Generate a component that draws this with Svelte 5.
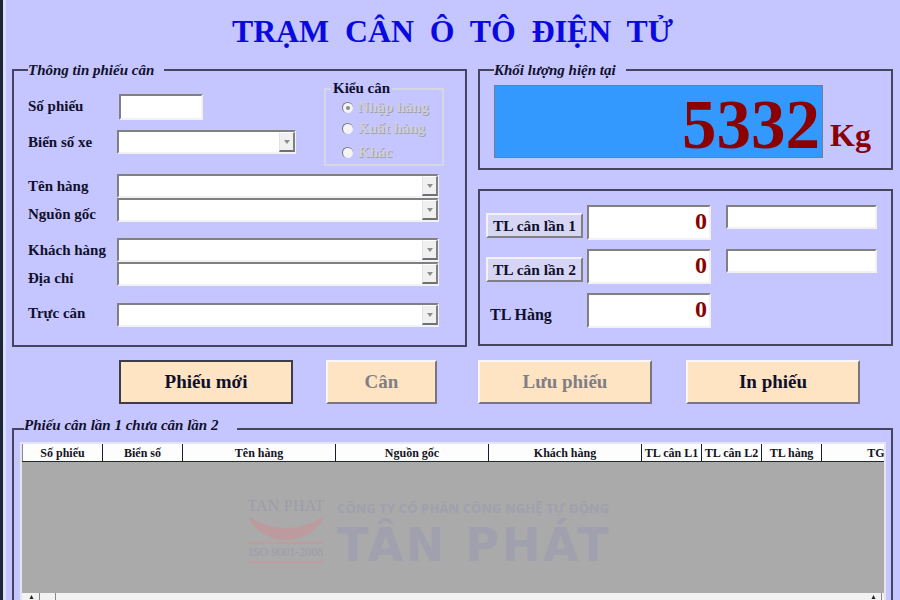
<script>
	const columns = [
		{ label: 'Số phiếu', width: 80 },
		{ label: 'Biển số', width: 80 },
		{ label: 'Tên hàng', width: 153 },
		{ label: 'Nguồn gốc', width: 153 },
		{ label: 'Khách hàng', width: 153 },
		{ label: 'TL cân L1', width: 60 },
		{ label: 'TL cân L2', width: 60 },
		{ label: 'TL hàng', width: 60 },
		{ label: 'TG', width: 109 }
	];

	const lowerFields = [
		{ label: 'Tên hàng', cls: 'first' },
		{ label: 'Nguồn gốc', cls: 'tight' },
		{ label: 'Khách hàng', cls: 'spaced' },
		{ label: 'Địa chỉ', cls: 'tight' },
		{ label: 'Trực cân', cls: 'spaced duty' }
	];

	const radios = [
		{ label: 'Nhập hàng', checked: true, cls: '' },
		{ label: 'Xuất hàng', checked: false, cls: '' },
		{ label: 'Khác', checked: false, cls: 'last' }
	];

	const actions = [
		{ label: 'Phiếu mới', cls: 'wide focused' },
		{ label: 'Cân', cls: 'narrow disabled' },
		{ label: 'Lưu phiếu', cls: 'wide disabled' },
		{ label: 'In phiếu', cls: 'wide' }
	];
</script>

{#snippet combo(cls)}
	<div class="combo {cls}">
		<span class="combo-btn"><i></i></span>
	</div>
{/snippet}

<div class="app">
	<h1 class="title">TRẠM&nbsp; CÂN&nbsp; Ô&nbsp; TÔ&nbsp; ĐIỆN&nbsp; TỬ</h1>

	<div class="top">
		<fieldset class="panel info">
			<legend>Thông tin phiếu cân</legend>
			<div class="info-head">
				<div class="head-fields">
					<div class="row ticket">
						<span class="lbl">Số phiếu</span>
						<div class="input ticket-input"></div>
					</div>
					<div class="row plate">
						<span class="lbl">Biển số xe</span>
						{@render combo('short')}
					</div>
				</div>
				<fieldset class="kind">
					<legend>Kiểu cân</legend>
					{#each radios as r}
						<div class="radio {r.cls}">
							<span class="dot" class:checked={r.checked}></span>
							<span class="radio-text">{r.label}</span>
						</div>
					{/each}
				</fieldset>
			</div>
			{#each lowerFields as f}
				<div class="row {f.cls}">
					<span class="lbl">{f.label}</span>
					{@render combo('long')}
				</div>
			{/each}
		</fieldset>

		<div class="right">
			<fieldset class="panel weight">
				<legend>Khối lượng hiện tại</legend>
				<div class="weight-row">
					<div class="display">5332</div>
					<span class="unit">Kg</span>
				</div>
			</fieldset>
			<div class="panel totals">
				<button class="mini">TL cân lần 1</button>
				<div class="input num">0</div>
				<div class="input note"></div>
				<button class="mini">TL cân lần 2</button>
				<div class="input num">0</div>
				<div class="input note"></div>
				<span class="total-lbl">TL Hàng</span>
				<div class="input num">0</div>
			</div>
		</div>
	</div>

	<div class="actions">
		{#each actions as a}
			<button class="action {a.cls}">{a.label}</button>
		{/each}
	</div>

	<fieldset class="panel list">
		<legend>Phiếu cân lần 1 chưa cân lần 2</legend>
		<div class="grid">
			<div class="grid-head">
				{#each columns as c}
					<div class="col" style="width: {c.width}px">{c.label}</div>
				{/each}
			</div>
			<div class="grid-body">
				<div class="mark">
					<div class="mark-logo">
						<span class="mark-name">TAN PHAT</span>
						<svg class="mark-arc" width="76" height="25" viewBox="0 0 76 25">
							<path d="M0 0 C14 9 26 12 38 12 C50 12 62 9 76 0 C70 15 54 24 38 24 C22 24 6 15 0 0 Z" fill="#bd9a9e" />
						</svg>
						<span class="mark-iso">ISO 9001-2008</span>
					</div>
					<div class="mark-text">
						<span class="mark-company">CÔNG TY CỔ PHẦN CÔNG NGHỆ TỰ ĐỘNG</span>
						<span class="mark-brand">TÂN PHÁT</span>
					</div>
				</div>
			</div>
			<div class="scroll">
				<span class="arrow"><svg width="7" height="7" viewBox="0 0 7 7"><path d="M3.5 1 L5.5 5 L1.5 5 Z" fill="#222" /></svg></span>
				<span class="arrow"></span>
				<span class="track"></span>
				<span class="arrow"><svg width="7" height="7" viewBox="0 0 7 7"><path d="M3.5 1 L5.5 5 L1.5 5 Z" fill="#222" /></svg></span>
			</div>
		</div>
	</fieldset>
</div>

<style>
	:global(body) {
		background: #c5c5ff;
	}

	.app {
		width: 900px;
		height: 600px;
		overflow: hidden;
		box-sizing: border-box;
		padding: 0 7px 0 9px;
		border-left: 3px solid #1b2735;
		box-shadow: inset 3px 0 0 #dcdcff;
		background: #c5c5ff;
		font-family: "Liberation Serif", "Times New Roman", serif;
		color: #10102c;
		display: flex;
		flex-direction: column;
	}

	.app > * {
		flex: none;
	}

	.title {
		margin: 0;
		height: 62px;
		box-sizing: border-box;
		padding: 13px 0 0 0;
		font-size: 31.8px;
		line-height: 37px;
		font-weight: bold;
		color: #0a0ae0;
		text-align: center;
		white-space: nowrap;
	}

	.top {
		display: flex;
		gap: 11px;
	}

	fieldset {
		margin: 0;
		min-width: 0;
	}

	.panel {
		box-sizing: border-box;
		border: 2px solid #45455f;
		padding: 0;
	}

	.panel > legend {
		font-style: italic;
		font-weight: bold;
		font-size: 15px;
		line-height: 16px;
		padding: 0 10px 0 0;
		white-space: nowrap;
	}

	.info {
		width: 455px;
		height: 285px;
		padding: 3px 26px 0 14px;
	}

	.info-head {
		display: flex;
		justify-content: space-between;
		height: 84px;
		margin-right: -5px;
	}

	.row {
		display: flex;
		align-items: center;
		height: 24px;
	}

	.lbl {
		width: 89px;
		flex: none;
		box-sizing: border-box;
		font-size: 15px;
		font-weight: bold;
		white-space: nowrap;
	}

	.ticket {
		margin-top: 13px;
		height: 26px;
	}

	.ticket .lbl {
		width: 91px;
		padding-bottom: 2px;
	}

	.plate {
		margin-top: 10px;
	}

	.first {
		margin-top: 9px;
	}

	.tight {
		margin-top: 0;
	}

	.spaced {
		margin-top: 16px;
	}

	.duty {
		margin-top: 17px;
	}

	.first .lbl,
	.spaced .lbl {
		padding-top: 1px;
	}

	.tight .lbl {
		padding-top: 8px;
	}

	.duty .lbl {
		padding-top: 0;
		padding-bottom: 3px;
	}

	.input,
	.combo {
		box-sizing: border-box;
		background: #fff;
		border: 2px solid;
		border-color: #808080 #f2f2f6 #f2f2f6 #808080;
	}

	.ticket-input {
		width: 84px;
		height: 26px;
	}

	.combo {
		height: 24px;
		display: flex;
		justify-content: flex-end;
	}

	.short {
		width: 179px;
	}

	.long {
		flex: 1;
	}

	.combo-btn {
		width: 16px;
		height: 100%;
		box-sizing: border-box;
		margin-right: -1px;
		background: #f0f0f0;
		border: 1px solid;
		border-color: #fff #808080 #707070 #e2e2e2;
		border-width: 1px 2px 2px 1px;
		display: flex;
		align-items: center;
		justify-content: center;
	}

	.combo-btn i {
		width: 0;
		height: 0;
		border: 3.5px solid transparent;
		border-top: 4px solid #8c8c8c;
		border-bottom: 0;
	}

	.kind {
		box-sizing: border-box;
		width: 120px;
		height: 85px;
		padding: 0 0 0 16px;
		border: 2px solid #d7d7e4;
	}

	.kind legend {
		font-size: 15px;
		font-weight: bold;
		line-height: 15px;
		padding: 0 2px;
		margin-left: -11px;
		white-space: nowrap;
	}

	.radio {
		display: flex;
		align-items: center;
		gap: 5px;
		height: 16px;
		margin-top: 3px;
	}

	.radio + .radio {
		margin-top: 5px;
	}

	.radio.last {
		margin-top: 8px;
	}

	.dot {
		width: 11px;
		height: 11px;
		border-radius: 50%;
		background: #f4f4f4;
		border-top: 1px solid #777;
		border-left: 1px solid #777;
		box-sizing: border-box;
		display: flex;
		align-items: center;
		justify-content: center;
	}

	.dot.checked::after {
		content: "";
		width: 4px;
		height: 4px;
		border-radius: 50%;
		background: #8a8a8a;
	}

	.radio-text {
		font-size: 15px;
		font-weight: bold;
		color: #cfcfd8;
		text-shadow: 1px 1px 0 #a0a0a8;
		white-space: nowrap;
	}

	.right {
		width: 415px;
		display: flex;
		flex-direction: column;
		gap: 19px;
	}

	.weight {
		height: 108px;
		padding: 7px 0 0 14px;
	}

	.weight-row {
		display: flex;
		align-items: flex-end;
		gap: 7px;
	}

	.display {
		box-sizing: border-box;
		width: 329px;
		height: 73px;
		padding-right: 2px;
		background: #3399ff;
		border: 1px solid #6f7f95;
		color: #8b0000;
		font-size: 69px;
		font-weight: bold;
		line-height: 78px;
		text-align: right;
	}

	.unit {
		font-size: 32px;
		font-weight: bold;
		color: #8b0000;
		line-height: 36px;
		margin-bottom: 5px;
	}

	.totals {
		height: 157px;
		padding: 14px 0 0 6px;
		display: grid;
		grid-template-columns: 101px 124px 166px;
		grid-auto-rows: 35px;
		row-gap: 9px;
	}

	.mini {
		align-self: end;
		width: 97px;
		height: 25px;
		box-sizing: border-box;
		padding: 0;
		margin: 0 0 2px 0;
		background: #d6d6f4;
		border: 2px solid;
		border-color: #f1f1f8 #808080 #808080 #f1f1f8;
		font: bold 15.5px "Liberation Serif", serif;
		color: #10102c;
		white-space: nowrap;
	}

	.num {
		text-align: right;
		font-size: 24px;
		font-weight: bold;
		color: #8b0000;
		line-height: 29px;
		padding-right: 2px;
	}

	.note {
		width: 151px;
		height: 24px;
		justify-self: end;
	}

	.total-lbl {
		align-self: end;
		padding: 0 0 4px 4px;
		font-size: 16px;
		font-weight: bold;
		white-space: nowrap;
	}

	.actions {
		display: flex;
		margin-top: 13px;
		margin-left: 107px;
		height: 44px;
	}

	.action {
		box-sizing: border-box;
		height: 44px;
		padding: 0;
		margin-right: 33px;
		background: #ffe4c4;
		border: 2px solid;
		border-color: #f6f6fb #77777e #77777e #f6f6fb;
		font: bold 19px "Liberation Serif", serif;
		color: #10102c;
	}

	.action:nth-child(3) {
		margin-right: 34px;
	}

	.action.wide {
		width: 174px;
	}

	.action.narrow {
		width: 111px;
		margin-right: 41px;
	}

	.action.focused {
		border-color: #3d3d48;
	}

	.action.disabled {
		color: #7f7f84;
	}

	.list {
		margin-top: 12px;
		width: 881px;
		height: 250px;
		padding: 3px 0 0 8px;
		border-bottom: 0;
	}

	.list > legend {
		line-height: 19px;
		padding: 0 19px 6px 0;
		margin-left: 2px;
	}

	.grid {
		width: 862px;
		height: 165px;
		box-sizing: border-box;
		background: #f2f2f6;
		box-shadow: 0 0 0 2px #e4e4f2;
		overflow: hidden;
	}

	.grid-head {
		display: flex;
		height: 18px;
		background: #fdfdfd;
		border-bottom: 1px solid #202060;
		box-sizing: border-box;
	}

	.col {
		flex: none;
		box-sizing: border-box;
		border-left: 1px solid #1a1a30;
		font-size: 12px;
		font-weight: bold;
		line-height: 18px;
		text-align: center;
		white-space: nowrap;
		color: #14141e;
	}

	.col:first-child {
		border-left-color: #888;
	}

	.grid-body {
		position: relative;
		height: 131px;
		background: #aaaaaa;
	}

	.mark {
		position: absolute;
		left: 226px;
		top: 35px;
		display: flex;
		gap: 13px;
	}

	.mark-logo {
		width: 76px;
		display: flex;
		flex-direction: column;
		align-items: center;
	}

	.mark-name {
		font-size: 16px;
		line-height: 18px;
		color: #9d9dab;
		white-space: nowrap;
		letter-spacing: 0.2px;
	}

	.mark-arc {
		margin-top: 1px;
		margin-bottom: 1px;
	}

	.mark-iso {
		width: 100%;
		box-sizing: border-box;
		text-align: center;
		font-size: 12px;
		line-height: 17px;
		color: #9d9dab;
		border-top: 2px solid #bf9c9f;
		border-bottom: 2px solid #bf9c9f;
		white-space: nowrap;
	}

	.mark-text {
		display: flex;
		flex-direction: column;
		width: 272px;
		font-family: "Open Sans", "Liberation Sans", sans-serif;
		font-weight: bold;
		color: #a0a0ae;
	}

	.mark-company {
		font-size: 13px;
		line-height: 18px;
		margin-top: 2px;
		letter-spacing: 0.1px;
		white-space: nowrap;
	}

	.mark-brand {
		font-family: "DejaVu Sans", sans-serif;
		font-size: 46px;
		line-height: 48px;
		font-weight: bold;
		letter-spacing: 2.6px;
		margin-top: 4px;
		white-space: nowrap;
	}

	.scroll {
		display: flex;
		height: 16px;
		padding: 0 2px;
		background: #f2f2f2;
	}

	.arrow {
		width: 16px;
		height: 16px;
		box-sizing: border-box;
		border-right: 1px solid #888;
		display: flex;
		justify-content: center;
		padding-top: 1px;
	}

	.track {
		flex: 1;
	}
</style>
